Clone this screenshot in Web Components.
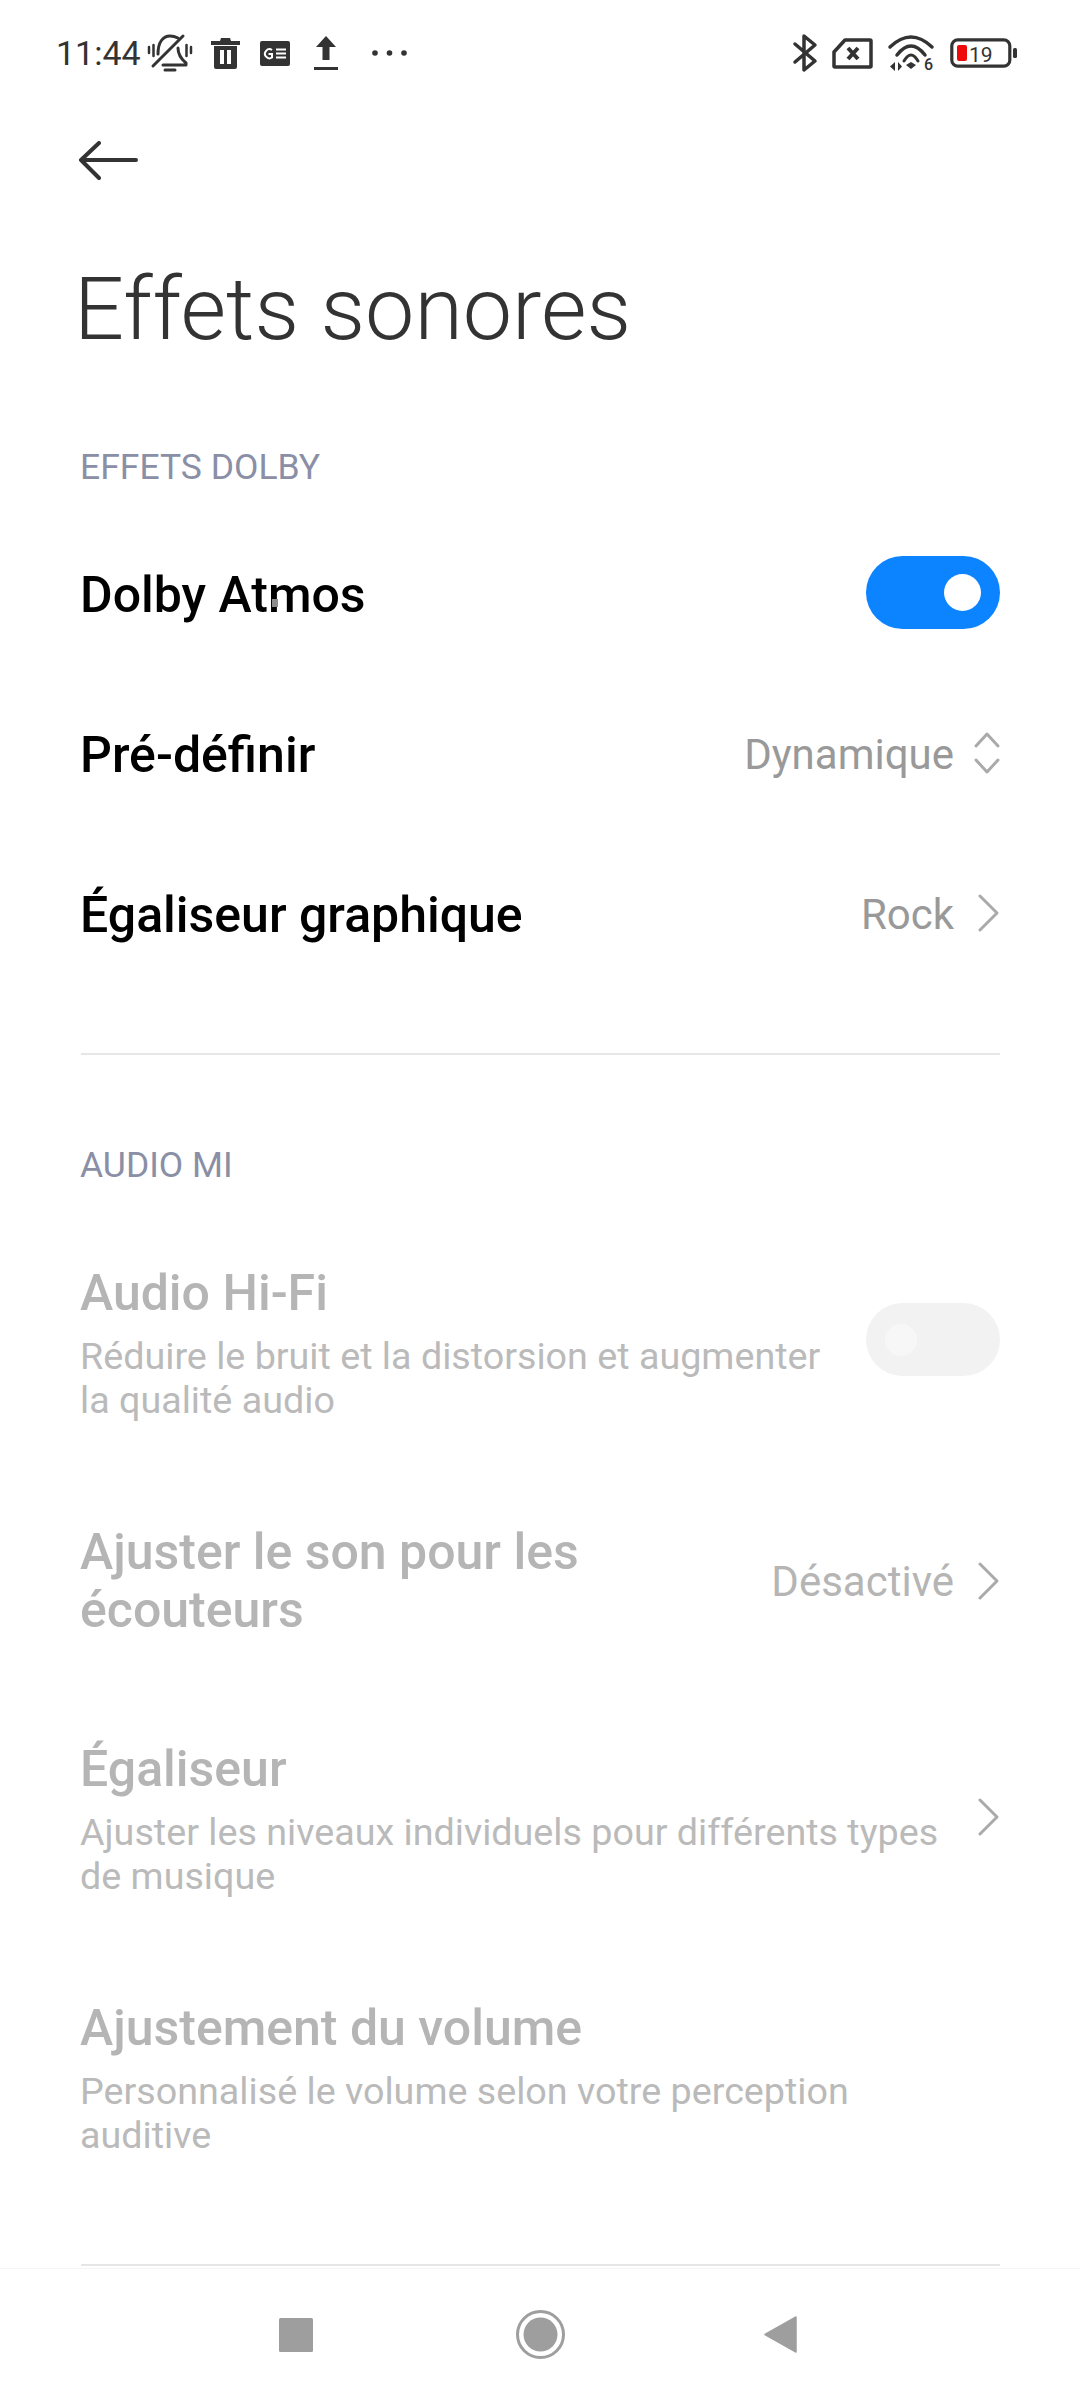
<!DOCTYPE html>
<html lang="fr">
<head>
<meta charset="utf-8">
<title>Effets sonores</title>
<style>
    html, body { margin: 0; padding: 0; background: #fff; }
    body { font-family: Roboto, "Noto Sans", sans-serif; }
</style>
</head>
<body>
<settings-page>
    <status-bar></status-bar>
    <page-header heading="Effets sonores"></page-header>

    <section-label>EFFETS DOLBY</section-label>
    <setting-row compact>
        <span slot="title" style="position: relative; display: inline-block">Dolby Atmos<i style="position: absolute; left: 192px; top: 33px; width: 6px; height: 8px; background: #8c8c8c"></i></span>
        <toggle-switch slot="end" checked></toggle-switch>
    </setting-row>
    <setting-row compact>
        <span slot="title">Pré-définir</span>
        <span slot="value">Dynamique</span>
        <row-chevron slot="end" kind="updown"></row-chevron>
    </setting-row>
    <setting-row compact>
        <span slot="title">Égaliseur graphique</span>
        <span slot="value">Rock</span>
        <row-chevron slot="end"></row-chevron>
    </setting-row>

    <list-divider style="--divider-top: 60px"></list-divider>

    <section-label style="--label-top: 62px; --label-bottom: 3px">AUDIO MI</section-label>
    <setting-row disabled>
        <span slot="title">Audio Hi-Fi</span>
        <span slot="summary">Réduire le bruit et la distorsion et augmenter la qualité audio</span>
        <toggle-switch slot="end" disabled></toggle-switch>
    </setting-row>
    <setting-row disabled style="margin-top: 1px">
        <span slot="title">Ajuster le son pour les écouteurs</span>
        <span slot="value">Désactivé</span>
        <row-chevron slot="end"></row-chevron>
    </setting-row>
    <setting-row disabled style="margin-top: 1px">
        <span slot="title">Égaliseur</span>
        <span slot="summary">Ajuster les niveaux individuels pour différents types de musique</span>
        <row-chevron slot="end" style="margin-bottom: 5px"></row-chevron>
    </setting-row>
    <setting-row disabled style="margin-top: 1px">
        <span slot="title">Ajustement du volume</span>
        <span slot="summary">Personnalisé le volume selon votre perception auditive</span>
    </setting-row>

    <list-divider slot="bottom"></list-divider>
    <nav-keys slot="bottom"></nav-keys>
</settings-page>

<script>
class SettingsPage extends HTMLElement {
    constructor() {
        super();
        const shadow = this.attachShadow({ mode: 'open' });
        shadow.innerHTML = `
            <style>
                :host {
                    display: flex;
                    flex-direction: column;
                    width: 1080px;
                    height: 2400px;
                    overflow: hidden;
                    background: #fff;
                    color: #000;
                    font-family: Roboto, "Noto Sans", sans-serif;
                }
                #content { flex: 1; min-height: 0; }
            </style>
            <div id="content"><slot></slot></div>
            <slot name="bottom"></slot>
        `;
    }
}

class StatusBar extends HTMLElement {
    constructor() {
        super();
        const shadow = this.attachShadow({ mode: 'open' });
        shadow.innerHTML = `
            <style>
                :host {
                    display: flex;
                    align-items: center;
                    height: 106px;
                    padding: 0 63px 0 56px;
                    box-sizing: border-box;
                    color: #333;
                    font-size: 34px;
                }
                #time { width: 92px; }
                svg { display: block; flex: none; overflow: visible; }
                #left, #right { display: flex; align-items: center; }
                #right { margin-left: auto; }
                #right svg { margin-left: 15px; }
            </style>
            <span id="time">11:44</span>
            <div id="left">
                <svg width="44" height="38" viewBox="0 0 44 38" fill="none" stroke="#333" stroke-width="3" stroke-linecap="round" stroke-linejoin="round">
                    <path d="M10 20C10 8 15 2 22 2c3 0 6 1 8 2"/>
                    <path d="M30 14c0 6 2 10 8 15v2H15"/>
                    <path d="M5 32 35 2"/>
                    <path d="M17 36h10" stroke-width="3"/>
                    <path d="M1 13v6M5.500 11v11M38.500 11v11M43 13v6" stroke-width="2.500"/>
                </svg>
                <svg width="29" height="31" viewBox="0 0 29 31" fill="#333" style="margin-left: 19px">
                    <path d="M10 0h9l1 3h9v4H0V3h9zM3 8h23v21a2 2 0 0 1-2 2H5a2 2 0 0 1-2-2zm6 4v14h4V12zm7 0v14h4V12z" fill-rule="evenodd"/>
                </svg>
                <svg width="30" height="25" viewBox="0 0 30 25" style="margin-left: 20px">
                    <rect width="30" height="25" rx="2" fill="#333"/>
                    <path d="M12 9a4.500 4.500 0 1 0 0 7.500V13H8.500" fill="none" stroke="#fff" stroke-width="2"/>
                    <path d="M16 8.500h10M16 12.500h10M16 16.500h10" stroke="#fff" stroke-width="2"/>
                </svg>
                <svg width="24" height="34" viewBox="0 0 24 34" fill="#333" style="margin-left: 24px">
                    <path d="M12 0 22 11h-6.500v13h-7V11H2z"/>
                    <rect y="31" width="24" height="3"/>
                </svg>
                <svg width="35" height="6" viewBox="0 0 35 6" fill="#333" style="margin-left: 34px">
                    <circle cx="3" cy="3" r="2.800"/><circle cx="17.500" cy="3" r="2.800"/><circle cx="32" cy="3" r="2.800"/>
                </svg>
            </div>
            <div id="right">
                <svg width="24" height="38" viewBox="0 0 24 38" fill="none" stroke="#333" stroke-width="3.500" stroke-linejoin="round" stroke-linecap="round">
                    <path d="M2 10 22 27 11 36V2l11 9L2 28"/>
                </svg>
                <svg width="41" height="31" viewBox="0 0 41 31" fill="none" stroke="#333" stroke-width="3.500" stroke-linejoin="round">
                    <path d="M13 2h25a1 1 0 0 1 1 1v25a1 1 0 0 1-1 1H3a1 1 0 0 1-1-1V14z"/>
                    <path d="M16 10l10 11M26 10 16 21" stroke-width="4"/>
                </svg>
                <svg width="47" height="35" viewBox="0 0 47 35" fill="none" stroke="#333" stroke-width="3.500" stroke-linecap="round">
                    <path d="M2 11Q23-9 44 11"/>
                    <path d="M9 19Q23 1 37 19"/>
                    <path d="M16 25Q23 13 30 25" stroke-width="3"/>
                    <path d="M23 26l5 3-5 4-5-4z" fill="#333" stroke="none"/>
                    <path d="M7 26v9l-5-4.500zM10 26v9l4-4.500z" fill="#333" stroke="none"/>
                    <text x="36" y="34" font-family="Roboto" font-size="16" fill="#333" stroke="none" font-weight="500">6</text>
                </svg>
                <svg width="67" height="30" viewBox="0 0 67 30">
                    <rect x="1.800" y="1.800" width="58" height="26.400" rx="6" fill="none" stroke="#333" stroke-width="3.200"/>
                    <rect x="7" y="7" width="10" height="16" rx="2" fill="#ee0a0a"/>
                    <text x="19" y="23.500" font-family="Roboto" font-size="21" fill="#333">19</text>
                    <rect x="63" y="10" width="4" height="10" rx="1.500" fill="#333"/>
                </svg>
            </div>
        `;
    }
}

class PageHeader extends HTMLElement {
    constructor() {
        super();
        const shadow = this.attachShadow({ mode: 'open' });
        shadow.innerHTML = `
            <style>
                :host { display: block; height: 313px; padding: 35px 0 0 78px; box-sizing: border-box; }
                svg { display: block; }
                h1 {
                    margin: 78px 0 0 -4px;
                    font-weight: 300;
                    font-size: 88px;
                    line-height: 100px;
                    color: #333;
                }
            </style>
            <svg width="60" height="40" viewBox="0 0 60 40" fill="none" stroke="#333" stroke-width="4" stroke-linecap="round" stroke-linejoin="round">
                <path d="M58 19H4M21 2 3 19l18 18"/>
            </svg>
            <h1></h1>
        `;
        shadow.querySelector('h1').textContent = this.getAttribute('heading');
    }
}

class SectionLabel extends HTMLElement {
    constructor() {
        super();
        const shadow = this.attachShadow({ mode: 'open' });
        shadow.innerHTML = `
            <style>
                :host {
                    display: block;
                    margin-top: var(--label-top, 0);
                    margin-bottom: var(--label-bottom, 0);
                    padding: 2px 80px 0;
                    line-height: 92px;
                    height: 94px;
                    box-sizing: border-box;
                    font-size: 35.500px;
                    color: #8a8fa6;
                }
            </style>
            <slot></slot>
        `;
    }
}

class SettingRow extends HTMLElement {
    constructor() {
        super();
        const shadow = this.attachShadow({ mode: 'open' });
        shadow.innerHTML = `
            <style>
                :host {
                    display: flex;
                    align-items: center;
                    padding: 50px 80px 50px 80px;
                    box-sizing: border-box;
                }
                :host([compact]) { height: 160px; padding-top: 0; padding-bottom: 0; }
                :host([compact]) #text, :host([compact]) #value { padding-top: 3px; }
                #text { flex: 1; min-width: 0; }
                #inner { max-width: 880px; }
                #title {
                    font-size: 50px;
                    font-weight: 500;
                    line-height: 58px;
                    color: #000;
                }
                #summary {
                    margin-top: 12px;
                    font-size: 37.700px;
                    line-height: 44px;
                    color: #999;
                }
                #summary.empty, #value.empty { display: none; }
                #value { font-size: 42px; color: #999; margin-left: 30px; white-space: nowrap; }
                #end { flex: none; display: flex; margin-left: 20px; }
                :host([disabled]) #title { color: #b5b5b5; }
                :host([disabled]) #summary { color: #bababa; }
                :host([disabled]) #value { color: #b5b5b5; }
            </style>
            <div id="text">
                <div id="inner">
                    <div id="title"><slot name="title"></slot></div>
                    <div id="summary"><slot name="summary"></slot></div>
                </div>
            </div>
            <div id="value"><slot name="value"></slot></div>
            <div id="end"><slot name="end"></slot></div>
        `;
    }

    connectedCallback() {
        if (!this.querySelector('[slot="summary"]')) {
            this.shadowRoot.getElementById('summary').classList.add('empty');
        }
        if (!this.querySelector('[slot="value"]')) {
            this.shadowRoot.getElementById('value').classList.add('empty');
        }
    }
}

class ToggleSwitch extends HTMLElement {
    constructor() {
        super();
        const shadow = this.attachShadow({ mode: 'open' });
        shadow.innerHTML = `
            <style>
                :host {
                    display: flex;
                    align-items: center;
                    width: 134px;
                    height: 73px;
                    padding: 0 19px;
                    box-sizing: border-box;
                    border-radius: 37px;
                    background: #f2f2f2;
                    margin-bottom: 7px;
                }
                i { display: block; width: 32px; height: 32px; border-radius: 50%; background: #f7f7f7; }
                :host([checked]) { background: #0d84ff; justify-content: flex-end; margin-bottom: 1px; }
                :host([checked]) i { width: 37px; height: 37px; background: #fff; }
            </style>
            <i></i>
        `;
    }
}

class RowChevron extends HTMLElement {
    constructor() {
        super();
        const shadow = this.attachShadow({ mode: 'open' });
        const updown = this.getAttribute('kind') === 'updown';
        shadow.innerHTML = `
            <style>
                :host { display: block; }
                svg { display: block; }
            </style>
            ${updown ? `
            <svg width="26" height="42" viewBox="0 0 26 42" fill="none" stroke="#aaa" stroke-width="3" stroke-linecap="round" stroke-linejoin="round">
                <path d="M2 14 13 2l11 12M2 28l11 12 11-12"/>
            </svg>` : `
            <svg width="26" height="38" viewBox="0 0 26 38" fill="none" stroke="#aaa" stroke-width="3" stroke-linecap="round" stroke-linejoin="round">
                <path d="M6 2 23 19 6 36"/>
            </svg>`}
        `;
    }
}

class ListDivider extends HTMLElement {
    constructor() {
        super();
        const shadow = this.attachShadow({ mode: 'open' });
        shadow.innerHTML = `
            <style>
                :host {
                    display: block;
                    height: 2px;
                    margin: var(--divider-top, 0) 80px 0 81px;
                    background: #e6e6e6;
                }
            </style>
        `;
    }
}

class NavKeys extends HTMLElement {
    constructor() {
        super();
        const shadow = this.attachShadow({ mode: 'open' });
        shadow.innerHTML = `
            <style>
                :host {
                    display: flex;
                    align-items: center;
                    height: 132px;
                    padding-left: 279px;
                    box-sizing: border-box;
                    border-top: 1px solid #f5f5f5;
                    margin-top: 2px;
                }
                svg { display: block; flex: none; }
            </style>
            <svg width="34" height="34" viewBox="0 0 34 34"><rect width="34" height="34" rx="1.500" fill="#9e9e9e"/></svg>
            <svg width="49" height="49" viewBox="0 0 49 49" style="margin-left: 203px">
                <circle cx="24.500" cy="24.500" r="23" fill="none" stroke="#9e9e9e" stroke-width="3"/>
                <circle cx="24.500" cy="24.500" r="17" fill="#9e9e9e"/>
            </svg>
            <svg width="33" height="37" viewBox="0 0 33 37" style="margin-left: 199px"><path d="M32 1v35L1 18.500z" fill="#9e9e9e" stroke="#9e9e9e" stroke-width="1.500" stroke-linejoin="round"/></svg>
        `;
    }
}

customElements.define('settings-page', SettingsPage);
customElements.define('status-bar', StatusBar);
customElements.define('page-header', PageHeader);
customElements.define('section-label', SectionLabel);
customElements.define('setting-row', SettingRow);
customElements.define('toggle-switch', ToggleSwitch);
customElements.define('row-chevron', RowChevron);
customElements.define('list-divider', ListDivider);
customElements.define('nav-keys', NavKeys);
</script>
</body>
</html>
